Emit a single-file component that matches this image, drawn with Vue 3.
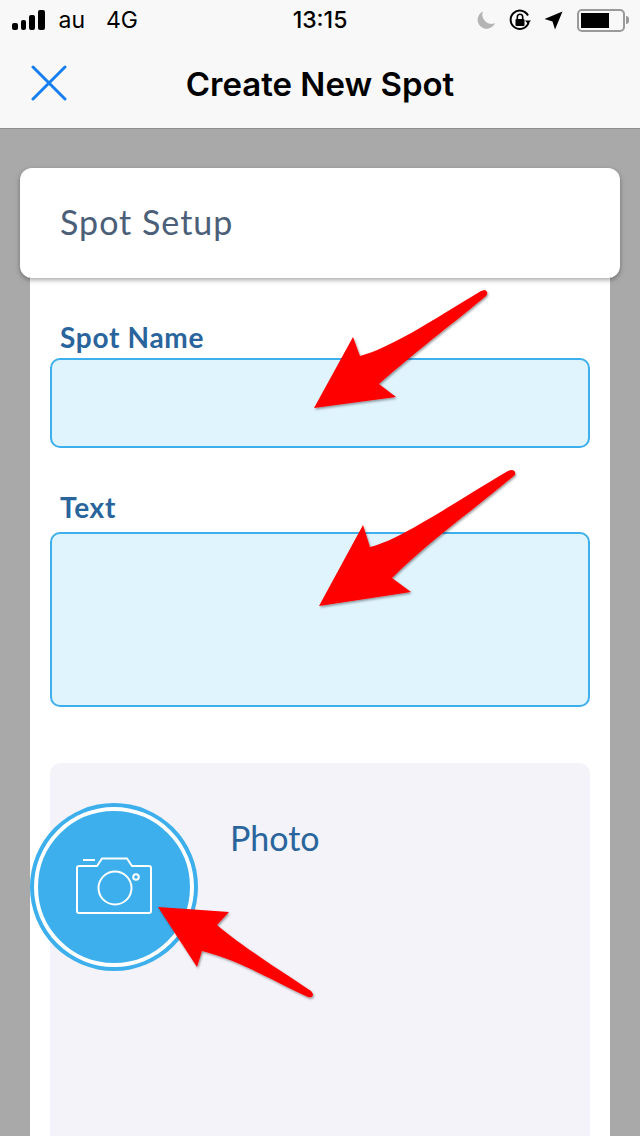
<script setup>
const arrows = [
  'M485 290 Q489 292 486 296 C460 318 420 348 379 384 L396 397 L314 408 L353 337 L360 356 C390 348 430 322 481 291 Z',
  'M511 470 Q516 470 515 475 C480 505 430 540 392 578 L411 592 L319 606 L363 525 L370 547 C400 540 450 505 508 471 Z',
  'M313 994 Q313 998 308 997 C280 985 240 960 202 951 L197 967 L158 907 L229 912 L217 925 C240 945 280 970 311 991 Z',
]
</script>

<template>
  <div class="page">
    <header class="top">
      <div class="status">
        <div class="status-left">
          <div class="signal">
            <i class="b1"></i><i class="b2"></i><i class="b3"></i><i class="b4"></i>
          </div>
          <span class="carrier">au</span>
          <span class="net">4G</span>
        </div>
        <div class="time">13:15</div>
        <div class="status-right">
          <svg class="moon" width="20" height="20" viewBox="0 0 20 20">
            <path d="M7 1.5a9 9 0 1 0 12 11.5a9 9 0 0 1-12-11.5z" fill="#b4b4b4" />
          </svg>
          <svg class="lock" width="24" height="24" viewBox="0 0 24 24">
            <path d="M20.6 14.5A9.2 9.2 0 1 1 20 7.5" fill="none" stroke="#000" stroke-width="2" />
            <path d="M17 12.5h6l-3 3.6z" fill="#000" />
            <rect x="7.5" y="11" width="9" height="7" rx="1" fill="#000" />
            <path d="M9.3 11V9a2.7 2.7 0 0 1 5.4 0v2" fill="none" stroke="#000" stroke-width="1.6" />
          </svg>
          <svg class="loc" width="19" height="19" viewBox="0 0 19 19">
            <path d="M18.5 0.5L11 18.5L8.500 10.500L0.500 8z" fill="#000" />
          </svg>
          <div class="battery">
            <div class="battery-body"><div class="battery-fill"></div></div>
            <div class="battery-nub"></div>
          </div>
        </div>
      </div>
      <div class="nav">
        <svg class="close" width="36" height="36" viewBox="0 0 36 36">
          <path d="M2 2L34 34M34 2L2 34" stroke="#157ff1" stroke-width="3" stroke-linecap="round" />
        </svg>
        <h1 class="title">Create New Spot</h1>
      </div>
    </header>

    <main class="content">
      <div class="card-head"><span class="card-title">Spot Setup</span></div>
      <div class="sheet">
        <label class="label first">Spot Name</label>
        <div class="input"></div>
        <label class="label second">Text</label>
        <div class="input area"></div>
        <div class="photo">
          <div class="cam">
            <svg width="78" height="60" viewBox="0 0 78 60">
              <g fill="none" stroke="#fff" stroke-width="2">
                <path d="M4 9H22L27 1.500H52L57 9H74a2 2 0 0 1 2 2V54a2 2 0 0 1-2 2H4a2 2 0 0 1-2-2V11a2 2 0 0 1 2-2z" />
                <circle cx="40" cy="31" r="16.500" />
                <circle cx="61" cy="20" r="2.800" />
                <path d="M8 3H20" />
              </g>
            </svg>
          </div>
          <span class="photo-label">Photo</span>
        </div>
      </div>
    </main>

    <svg class="arrows" width="640" height="1136" viewBox="0 0 640 1136">
      <defs>
        <filter id="arrow-shadow" x="-10%" y="-10%" width="120%" height="120%">
          <feDropShadow dx="1" dy="1.500" stdDeviation="1.200" flood-color="#000" flood-opacity="0.4" />
        </filter>
      </defs>
      <path v-for="(d, i) in arrows" :key="i" :d="d" fill="#ff0000" filter="url(#arrow-shadow)" />
    </svg>
  </div>
</template>

<style scoped>
.page {
  position: relative;
  width: 640px;
  height: 1136px;
  overflow: hidden;
  background: #a9a9a9;
  font-family: Lato, "Noto Sans", sans-serif;
}

.top {
  height: 129px;
  box-sizing: border-box;
  background: #f8f8f8;
  border-bottom: 1px solid #8f8f8f;
  font-family: Inter, Roboto, sans-serif;
  color: #000;
}

.status {
  position: relative;
  height: 40px;
  display: flex;
  align-items: center;
  justify-content: space-between;
  padding: 0 11px 0 12px;
}

.status-left {
  display: flex;
  align-items: center;
  font-size: 23px;
  line-height: 42px;
}

.signal {
  display: flex;
  align-items: flex-end;
  gap: 3px;
  height: 20px;
  margin-right: 14px;
}

.signal i {
  display: block;
  width: 5.500px;
  background: #000;
  border-radius: 2px;
}

.signal .b1 { height: 7px; }
.signal .b2 { height: 10px; }
.signal .b3 { height: 15px; }
.signal .b4 { height: 20px; width: 7px; }

.net {
  margin-left: 21px;
}

.time {
  position: absolute;
  left: 0;
  right: 0;
  text-align: center;
  font-size: 23px;
  font-weight: 500;
  line-height: 42px;
}

.status-right {
  display: flex;
  align-items: center;
}

.moon { margin-right: 12px; }
.lock { margin-right: 12px; }
.loc { margin-right: 14px; }

.battery {
  display: flex;
  align-items: center;
}

.battery-body {
  box-sizing: border-box;
  width: 48px;
  height: 23px;
  padding: 2px;
  border: 2px solid #9a9a9a;
  border-radius: 5px;
}

.battery-fill {
  width: 28px;
  height: 100%;
  background: #000;
}

.battery-nub {
  width: 3px;
  height: 8px;
  background: #9a9a9a;
  border-radius: 0 3px 3px 0;
  margin-left: 1px;
}

.nav {
  position: relative;
  height: 88px;
  display: flex;
  align-items: center;
  justify-content: center;
}

.close {
  position: absolute;
  left: 31px;
  top: 25px;
}

.title {
  margin: 0;
  font-size: 33px;
  font-weight: 600;
  letter-spacing: 0;
}

.content {
  padding: 39px 20px 0;
}

.card-head {
  position: relative;
  z-index: 1;
  height: 110px;
  box-sizing: border-box;
  padding: 0 0 4px 40px;
  display: flex;
  align-items: center;
  background: #fff;
  border-radius: 12px;
  box-shadow: 0 2px 5px rgba(0, 0, 0, 0.35);
  color: #4b6078;
  font-size: 34px;
  letter-spacing: 1px;
}

.sheet {
  margin: 0 10px;
  padding: 0 20px;
  background: #fff;
  height: 860px;
}

.label {
  display: block;
  padding-left: 10px;
  color: #29659c;
  font-size: 28px;
  font-weight: 700;
  letter-spacing: 0.7px;
  line-height: 34px;
}

.label.first { padding-top: 42px; padding-bottom: 4px; }
.label.second { padding-top: 42px; padding-bottom: 8px; }

.input {
  box-sizing: border-box;
  height: 90px;
  background: #e0f4fe;
  border: 2px solid #3dafec;
  border-radius: 10px;
}

.input.area {
  height: 175px;
}

.photo {
  position: relative;
  margin-top: 56px;
  height: 400px;
  background: #f3f3f9;
  border-radius: 10px;
}

.cam {
  position: absolute;
  left: -16px;
  top: 44px;
  box-sizing: border-box;
  width: 160px;
  height: 160px;
  display: flex;
  align-items: center;
  justify-content: center;
  background: #3dafec;
  border: 4px solid #fff;
  border-radius: 50%;
  box-shadow: 0 0 0 4px #3dafec;
}

.photo-label {
  position: absolute;
  left: 180px;
  top: 54px;
  color: #29659c;
  font-size: 34px;
  line-height: 42px;
}

.arrows {
  position: absolute;
  left: 0;
  top: 0;
  pointer-events: none;
}
</style>
